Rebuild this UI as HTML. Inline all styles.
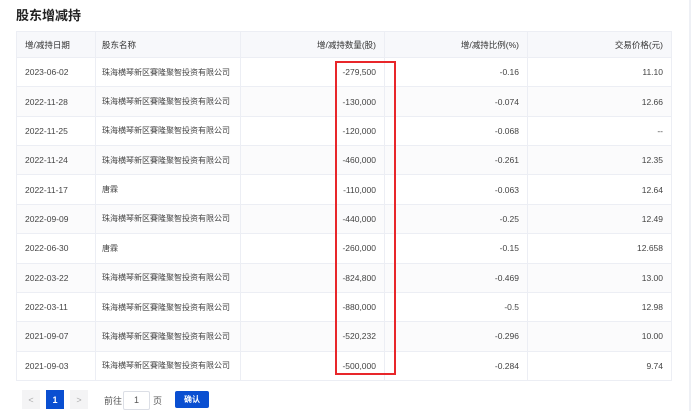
<!DOCTYPE html>
<html><head><meta charset="utf-8"><style>
*{margin:0;padding:0;box-sizing:border-box}
body{width:700px;height:411px;background:#fff;font-family:"Liberation Sans","Noto Sans CJK SC",sans-serif;position:relative;overflow:hidden;color:#333}
.title{position:absolute;left:16px;top:5px;font-size:13px;font-weight:bold;color:#222}
.strip{position:absolute;left:689px;top:0;width:2px;height:411px;background:#eef0f5}
.tbl{position:absolute;left:16px;top:31px;width:656px;border:1px solid #eceef4}
.r{display:flex;height:29.36px;border-top:1px solid #eceef4;font-size:8.5px;color:#444;white-space:nowrap}
.r.h{height:25px;border-top:none;background:#f7f8fb;color:#333}
.r.s{background:#fbfbfc}
.c{display:flex;align-items:center;padding:0 8px;border-right:1px solid #eceef4;overflow:hidden}
.c:last-child{border-right:none}
.c1{width:79px}.c2{width:145px;padding:0 6px;font-size:8px}.c3{width:144px;justify-content:flex-end}.c4{width:143px;justify-content:flex-end}.c5{flex:1;justify-content:flex-end}
.red{position:absolute;left:335px;top:61px;width:61px;height:314px;border:2px solid #e8262a}
.pb{position:absolute;top:390px;width:18px;height:19px;background:#f4f4f5;font-size:9px;color:#aaa;display:flex;align-items:center;justify-content:center}
</style></head><body>
<div class="title">股东增减持</div>
<div class="strip"></div>
<div class="tbl">
<div class="r h"><div class="c c1">增/减持日期</div><div class="c c2" style="font-size:8.5px">股东名称</div><div class="c c3">增/减持数量(股)</div><div class="c c4">增/减持比例(%)</div><div class="c c5">交易价格(元)</div></div>
<div class="r"><div class="c c1">2023-06-02</div><div class="c c2">珠海横琴新区賽隆聚智投资有限公司</div><div class="c c3">-279,500</div><div class="c c4">-0.16</div><div class="c c5">11.10</div></div>
<div class="r s"><div class="c c1">2022-11-28</div><div class="c c2">珠海横琴新区賽隆聚智投资有限公司</div><div class="c c3">-130,000</div><div class="c c4">-0.074</div><div class="c c5">12.66</div></div>
<div class="r"><div class="c c1">2022-11-25</div><div class="c c2">珠海横琴新区賽隆聚智投资有限公司</div><div class="c c3">-120,000</div><div class="c c4">-0.068</div><div class="c c5">--</div></div>
<div class="r s"><div class="c c1">2022-11-24</div><div class="c c2">珠海横琴新区賽隆聚智投资有限公司</div><div class="c c3">-460,000</div><div class="c c4">-0.261</div><div class="c c5">12.35</div></div>
<div class="r"><div class="c c1">2022-11-17</div><div class="c c2">唐霖</div><div class="c c3">-110,000</div><div class="c c4">-0.063</div><div class="c c5">12.64</div></div>
<div class="r s"><div class="c c1">2022-09-09</div><div class="c c2">珠海横琴新区賽隆聚智投资有限公司</div><div class="c c3">-440,000</div><div class="c c4">-0.25</div><div class="c c5">12.49</div></div>
<div class="r"><div class="c c1">2022-06-30</div><div class="c c2">唐霖</div><div class="c c3">-260,000</div><div class="c c4">-0.15</div><div class="c c5">12.658</div></div>
<div class="r s"><div class="c c1">2022-03-22</div><div class="c c2">珠海横琴新区賽隆聚智投资有限公司</div><div class="c c3">-824,800</div><div class="c c4">-0.469</div><div class="c c5">13.00</div></div>
<div class="r"><div class="c c1">2022-03-11</div><div class="c c2">珠海横琴新区賽隆聚智投资有限公司</div><div class="c c3">-880,000</div><div class="c c4">-0.5</div><div class="c c5">12.98</div></div>
<div class="r s"><div class="c c1">2021-09-07</div><div class="c c2">珠海横琴新区賽隆聚智投资有限公司</div><div class="c c3">-520,232</div><div class="c c4">-0.296</div><div class="c c5">10.00</div></div>
<div class="r"><div class="c c1">2021-09-03</div><div class="c c2">珠海横琴新区賽隆聚智投资有限公司</div><div class="c c3">-500,000</div><div class="c c4">-0.284</div><div class="c c5">9.74</div></div>
</div>
<div class="red"></div>
<div class="pb" style="left:22px">&lt;</div>
<div class="pb" style="left:46px;background:#0a4fd1;color:#fff;font-weight:bold">1</div>
<div class="pb" style="left:70px">&gt;</div>
<div style="position:absolute;left:104px;top:394px;font-size:9px;color:#555">前往</div>
<div style="position:absolute;left:123px;top:391px;width:27px;height:19px;border:1px solid #dcdfe6;border-radius:2px;font-size:9px;color:#555;text-align:center;line-height:17px">1</div>
<div style="position:absolute;left:153px;top:394px;font-size:9px;color:#555">页</div>
<div style="position:absolute;left:175px;top:391px;width:34px;height:17px;background:#0a4fd1;border-radius:2px;color:#fff;font-size:8px;font-weight:bold;text-align:center;line-height:17px">确认</div>
</body></html>
